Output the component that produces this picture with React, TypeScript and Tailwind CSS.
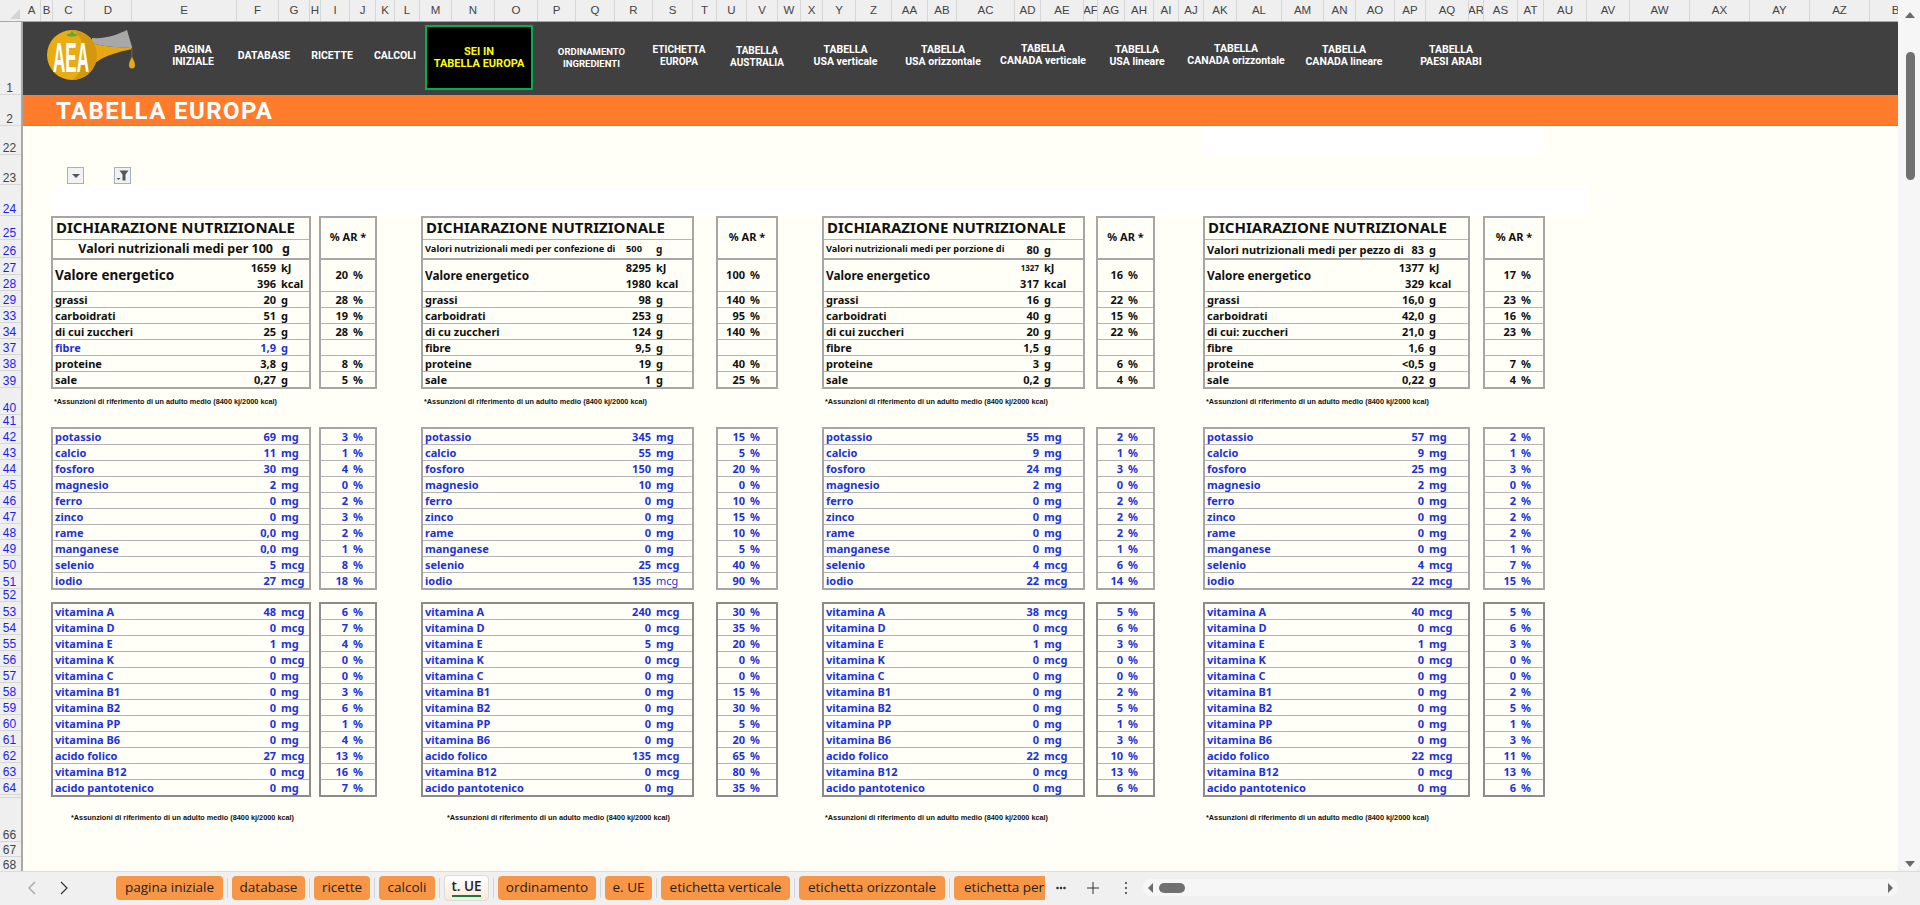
import React from 'react';

const noto = "font-['Noto_Sans',sans-serif]";

const columns = [
  ['A', 'w-[18px]'], ['B', 'w-[12px]'], ['C', 'w-[32px]'], ['D', 'w-[47px]'], ['E', 'w-[105px]'], ['F', 'w-[42px]'],
  ['G', 'w-[31px]'], ['H', 'w-[11px]'], ['I', 'w-[29px]'], ['J', 'w-[26px]'], ['K', 'w-[19px]'], ['L', 'w-[25px]'],
  ['M', 'w-[32px]'], ['N', 'w-[43px]'], ['O', 'w-[43px]'], ['P', 'w-[38px]'], ['Q', 'w-[39px]'], ['R', 'w-[38px]'],
  ['S', 'w-[40px]'], ['T', 'w-[24px]'], ['U', 'w-[30px]'], ['V', 'w-[31px]'], ['W', 'w-[23px]'], ['X', 'w-[22px]'],
  ['Y', 'w-[33px]'], ['Z', 'w-[36px]'], ['AA', 'w-[36px]'], ['AB', 'w-[29px]'], ['AC', 'w-[58px]'], ['AD', 'w-[26px]'],
  ['AE', 'w-[43px]'], ['AF', 'w-[14px]'], ['AG', 'w-[27px]'], ['AH', 'w-[29px]'], ['AI', 'w-[25px]'], ['AJ', 'w-[25px]'],
  ['AK', 'w-[33px]'], ['AL', 'w-[45px]'], ['AM', 'w-[42px]'], ['AN', 'w-[32px]'], ['AO', 'w-[39px]'], ['AP', 'w-[31px]'],
  ['AQ', 'w-[43px]'], ['AR', 'w-[15px]'], ['AS', 'w-[34px]'], ['AT', 'w-[26px]'], ['AU', 'w-[43px]'], ['AV', 'w-[43px]'],
  ['AW', 'w-[60px]'], ['AX', 'w-[60px]'], ['AY', 'w-[60px]'], ['AZ', 'w-[60px]'], ['BA', 'w-[60px]'],
];

const rowHeaders = [
  ['1', 'h-[73px]', 'text-[#444]'], ['2', 'h-[31px]', 'text-[#444]'], ['22', 'h-[29px]', 'text-[#444]'], ['23', 'h-[30px]', 'text-[#444]'],
  ['24', 'h-[31px]', 'text-[#1c1cf0]'], ['25', 'h-[24px]', 'text-[#1c1cf0]'], ['26', 'h-[18px]', 'text-[#1c1cf0]'], ['27', 'h-[17px]', 'text-[#1c1cf0]'],
  ['28', 'h-[16px]', 'text-[#1c1cf0]'], ['29', 'h-[16px]', 'text-[#1c1cf0]'], ['33', 'h-[16px]', 'text-[#1c1cf0]'], ['34', 'h-[16px]', 'text-[#1c1cf0]'],
  ['37', 'h-[16px]', 'text-[#1c1cf0]'], ['38', 'h-[16px]', 'text-[#1c1cf0]'], ['39', 'h-[17px]', 'text-[#1c1cf0]'], ['40', 'h-[27px]', 'text-[#1c1cf0]'],
  ['41', 'h-[13px]', 'text-[#1c1cf0]'], ['42', 'h-[16px]', 'text-[#1c1cf0]'], ['43', 'h-[16px]', 'text-[#1c1cf0]'], ['44', 'h-[16px]', 'text-[#1c1cf0]'],
  ['45', 'h-[16px]', 'text-[#1c1cf0]'], ['46', 'h-[16px]', 'text-[#1c1cf0]'], ['47', 'h-[16px]', 'text-[#1c1cf0]'], ['48', 'h-[16px]', 'text-[#1c1cf0]'],
  ['49', 'h-[16px]', 'text-[#1c1cf0]'], ['50', 'h-[16px]', 'text-[#1c1cf0]'], ['51', 'h-[17px]', 'text-[#1c1cf0]'], ['52', 'h-[13px]', 'text-[#1c1cf0]'],
  ['53', 'h-[17px]', 'text-[#1c1cf0]'], ['54', 'h-[16px]', 'text-[#1c1cf0]'], ['55', 'h-[16px]', 'text-[#1c1cf0]'], ['56', 'h-[16px]', 'text-[#1c1cf0]'],
  ['57', 'h-[16px]', 'text-[#1c1cf0]'], ['58', 'h-[16px]', 'text-[#1c1cf0]'], ['59', 'h-[16px]', 'text-[#1c1cf0]'], ['60', 'h-[16px]', 'text-[#1c1cf0]'],
  ['61', 'h-[16px]', 'text-[#1c1cf0]'], ['62', 'h-[16px]', 'text-[#1c1cf0]'], ['63', 'h-[16px]', 'text-[#1c1cf0]'], ['64', 'h-[16px]', 'text-[#1c1cf0]'],
  ['', 'h-[3px]', 'text-[#444]'], ['66', 'h-[44px]', 'text-[#444]'], ['67', 'h-[15px]', 'text-[#444]'], ['68', 'h-[15px]', 'text-[#444]'],
];

const navItems = [
  { lines: ['PAGINA', 'INIZIALE'], w: 'w-[72px]', pb: 'pb-[5px]' },
  { lines: ['DATABASE'], w: 'w-[70px]', pb: 'pb-[5px]' },
  { lines: ['RICETTE'], w: 'w-[66px]', pb: 'pb-[5px]' },
  { lines: ['CALCOLI'], w: 'w-[60px]', pb: 'pb-[5px]' },
];

const navItemsRight = [
  { lines: ['ORDINAMENTO', 'INGREDIENTI'], w: 'w-[115px]', pb: 'pb-[1px]', size: 'text-[9.5px]' },
  { lines: ['ETICHETTA', 'EUROPA'], w: 'w-[60px]', pb: 'pb-[5px]', size: 'text-[10px]' },
  { lines: ['TABELLA', 'AUSTRALIA'], w: 'w-[96px]', pb: 'pb-[3px]', size: 'text-[10px]' },
  { lines: ['TABELLA', 'USA verticale'], w: 'w-[81px]', pb: 'pb-[5px]' },
  { lines: ['TABELLA', 'USA orizzontale'], w: 'w-[114px]', pb: 'pb-[5px]' },
  { lines: ['TABELLA', 'CANADA verticale'], w: 'w-[86px]', pb: 'pb-[7px]' },
  { lines: ['TABELLA', 'USA lineare'], w: 'w-[102px]', pb: 'pb-[5px]' },
  { lines: ['TABELLA', 'CANADA orizzontale'], w: 'w-[96px]', pb: 'pb-[7px]' },
  { lines: ['TABELLA', 'CANADA lineare'], w: 'w-[120px]', pb: 'pb-[5px]' },
  { lines: ['TABELLA', 'PAESI ARABI'], w: 'w-[94px]', pb: 'pb-[5px]' },
];

const mineralNames = ['potassio', 'calcio', 'fosforo', 'magnesio', 'ferro', 'zinco', 'rame', 'manganese', 'selenio', 'iodio'];
const vitaminNames = ['vitamina A', 'vitamina D', 'vitamina E', 'vitamina K', 'vitamina C', 'vitamina B1', 'vitamina B2', 'vitamina PP', 'vitamina B6', 'acido folico', 'vitamina B12', 'acido pantotenico'];

type Row = { label: string; value: string; unit: string; pct: string; blue?: boolean; lightUnit?: boolean };

const zip = (names: string[], vals: string[][], blue = true): Row[] =>
  names.map((label, i) => ({ label, value: vals[i][0], unit: vals[i][1], pct: vals[i][2], blue }));

const tables = [
  {
    ml: 'ml-[28px]', mainW: 'w-[260px]', arW: 'w-[58px]', gap: 'gap-[8px]', unitW: 'w-[33px]', pctW: 'w-[27px]',
    note2: 'pl-[20px]',
    energyLabel: 'text-[13.5px]', kj: '1659', kjSize: 'text-[11px]', kcal: '396', energyPct: '20',
    sub: (
      <div className="flex h-[18px] items-center text-[12.5px] font-bold leading-none">
        <span className="flex-1 text-right">Valori nutrizionali medi per 100</span>
        <span className="w-[36px] pl-[9px]">g</span>
      </div>
    ),
    macro: [
      { label: 'grassi', value: '20', unit: 'g', pct: '28' }, { label: 'carboidrati', value: '51', unit: 'g', pct: '19' },
      { label: 'di cui zuccheri', value: '25', unit: 'g', pct: '28' }, { label: 'fibre', value: '1,9', unit: 'g', pct: '', blue: true },
      { label: 'proteine', value: '3,8', unit: 'g', pct: '8' }, { label: 'sale', value: '0,27', unit: 'g', pct: '5' },
    ] as Row[],
    minerals: zip(mineralNames, [['69', 'mg', '3'], ['11', 'mg', '1'], ['30', 'mg', '4'], ['2', 'mg', '0'], ['0', 'mg', '2'], ['0', 'mg', '3'], ['0,0', 'mg', '2'], ['0,0', 'mg', '1'], ['5', 'mcg', '8'], ['27', 'mcg', '18']]),
    vitamins: zip(vitaminNames, [['48', 'mcg', '6'], ['0', 'mcg', '7'], ['1', 'mg', '4'], ['0', 'mcg', '0'], ['0', 'mg', '0'], ['0', 'mg', '3'], ['0', 'mg', '6'], ['0', 'mg', '1'], ['0', 'mg', '4'], ['27', 'mcg', '13'], ['0', 'mcg', '16'], ['0', 'mg', '7']]),
  },
  {
    ml: 'ml-[44px]', mainW: 'w-[273px]', arW: 'w-[62px]', gap: 'gap-[22px]', unitW: 'w-[41px]', pctW: 'w-[31px]',
    note2: 'pl-[26px]',
    energyLabel: 'text-[11.8px]', kj: '8295', kjSize: 'text-[11px]', kcal: '1980', energyPct: '100',
    sub: (
      <div className="flex h-[18px] items-center text-[9.3px] font-bold leading-none">
        <span className="w-[203px] whitespace-nowrap pl-[2px]">Valori nutrizionali medi per confezione di</span>
        <span className="w-[30px]">500</span>
        <span className="text-[10px]">g</span>
      </div>
    ),
    macro: [
      { label: 'grassi', value: '98', unit: 'g', pct: '140' }, { label: 'carboidrati', value: '253', unit: 'g', pct: '95' },
      { label: 'di cu zuccheri', value: '124', unit: 'g', pct: '140' }, { label: 'fibre', value: '9,5', unit: 'g', pct: '' },
      { label: 'proteine', value: '19', unit: 'g', pct: '40' }, { label: 'sale', value: '1', unit: 'g', pct: '25' },
    ] as Row[],
    minerals: zip(mineralNames, [['345', 'mg', '15'], ['55', 'mg', '5'], ['150', 'mg', '20'], ['10', 'mg', '0'], ['0', 'mg', '10'], ['0', 'mg', '15'], ['0', 'mg', '10'], ['0', 'mg', '5'], ['25', 'mcg', '40'], ['135', 'mcg', '90']]).map((r) => (r.label === 'iodio' ? { ...r, lightUnit: true } : r)),
    vitamins: zip(vitaminNames, [['240', 'mcg', '30'], ['0', 'mcg', '35'], ['5', 'mg', '20'], ['0', 'mcg', '0'], ['0', 'mg', '0'], ['0', 'mg', '15'], ['0', 'mg', '30'], ['0', 'mg', '5'], ['0', 'mg', '20'], ['135', 'mcg', '65'], ['0', 'mcg', '80'], ['0', 'mg', '35']]),
  },
  {
    ml: 'ml-[44px]', mainW: 'w-[263px]', arW: 'w-[59px]', gap: 'gap-[11px]', unitW: 'w-[44px]', pctW: 'w-[30px]',
    note2: 'pl-[3px]',
    energyLabel: 'text-[11.8px]', kj: '1327', kjSize: 'text-[8px]', kcal: '317', energyPct: '16',
    sub: (
      <div className="flex h-[18px] items-center text-[9.2px] font-bold leading-none">
        <span className="flex-1 whitespace-nowrap pl-[2px]">Valori nutrizionali medi per porzione di</span>
        <span className="text-[11px]">80</span>
        <span className="w-[44px] pl-[5px] text-[11px]">g</span>
      </div>
    ),
    macro: [
      { label: 'grassi', value: '16', unit: 'g', pct: '22' }, { label: 'carboidrati', value: '40', unit: 'g', pct: '15' },
      { label: 'di cui zuccheri', value: '20', unit: 'g', pct: '22' }, { label: 'fibre', value: '1,5', unit: 'g', pct: '' },
      { label: 'proteine', value: '3', unit: 'g', pct: '6' }, { label: 'sale', value: '0,2', unit: 'g', pct: '4' },
    ] as Row[],
    minerals: zip(mineralNames, [['55', 'mg', '2'], ['9', 'mg', '1'], ['24', 'mg', '3'], ['2', 'mg', '0'], ['0', 'mg', '2'], ['0', 'mg', '2'], ['0', 'mg', '2'], ['0', 'mg', '1'], ['4', 'mcg', '6'], ['22', 'mcg', '14']]),
    vitamins: zip(vitaminNames, [['38', 'mcg', '5'], ['0', 'mcg', '6'], ['1', 'mg', '3'], ['0', 'mcg', '0'], ['0', 'mg', '0'], ['0', 'mg', '2'], ['0', 'mg', '5'], ['0', 'mg', '1'], ['0', 'mg', '3'], ['22', 'mcg', '10'], ['0', 'mcg', '13'], ['0', 'mg', '6']]),
  },
  {
    ml: 'ml-[48px]', mainW: 'w-[267px]', arW: 'w-[62px]', gap: 'gap-[13px]', unitW: 'w-[44px]', pctW: 'w-[27px]',
    note2: 'pl-[3px]',
    energyLabel: 'text-[11.8px]', kj: '1377', kjSize: 'text-[11px]', kcal: '329', energyPct: '17',
    sub: (
      <div className="flex h-[18px] items-center text-[11px] font-bold leading-none">
        <span className="flex-1 whitespace-nowrap pl-[2px]">Valori nutrizionali medi per pezzo di</span>
        <span>83</span>
        <span className="w-[44px] pl-[5px]">g</span>
      </div>
    ),
    macro: [
      { label: 'grassi', value: '16,0', unit: 'g', pct: '23' }, { label: 'carboidrati', value: '42,0', unit: 'g', pct: '16' },
      { label: 'di cui: zuccheri', value: '21,0', unit: 'g', pct: '23' }, { label: 'fibre', value: '1,6', unit: 'g', pct: '' },
      { label: 'proteine', value: '<0,5', unit: 'g', pct: '7' }, { label: 'sale', value: '0,22', unit: 'g', pct: '4' },
    ] as Row[],
    minerals: zip(mineralNames, [['57', 'mg', '2'], ['9', 'mg', '1'], ['25', 'mg', '3'], ['2', 'mg', '0'], ['0', 'mg', '2'], ['0', 'mg', '2'], ['0', 'mg', '2'], ['0', 'mg', '1'], ['4', 'mcg', '7'], ['22', 'mcg', '15']]),
    vitamins: zip(vitaminNames, [['40', 'mcg', '5'], ['0', 'mcg', '6'], ['1', 'mg', '3'], ['0', 'mcg', '0'], ['0', 'mg', '0'], ['0', 'mg', '2'], ['0', 'mg', '5'], ['0', 'mg', '1'], ['0', 'mg', '3'], ['22', 'mcg', '11'], ['0', 'mcg', '13'], ['0', 'mg', '6']]),
  },
];

const tabs = [
  { label: 'pagina iniziale', w: 'w-[107px]' }, { label: 'database', w: 'w-[73px]' }, { label: 'ricette', w: 'w-[56px]' },
  { label: 'calcoli', w: 'w-[56px]' }, { label: 't. UE', w: 'w-[45px]', active: true }, { label: 'ordinamento', w: 'w-[98px]' },
  { label: 'e. UE', w: 'w-[47px]' }, { label: 'etichetta verticale', w: 'w-[129px]' }, { label: 'etichetta orizzontale', w: 'w-[146px]' },
];

function Logo() {
  return (
    <svg width="90" height="54" viewBox="47 28 90 54" className="block">
      <path d="M92 38 C108 39 118 34 127 30 L132 47 C118 48 105 47 92 43 Z" fill="#a8a8a8" />
      <path d="M92 43 C105 47 118 48 132 47 L132 49 C118 52 106 55 95 63 Z" fill="#e8a813" />
      <rect x="131" y="48" width="1.5" height="10" fill="#6b5a2a" />
      <path d="M132 57 C133.5 60 135 62 135 65 A3 3.5 0 0 1 129 65 C129 62 130.5 60 132 57 Z" fill="#e8a813" />
      <circle cx="72" cy="55" r="25" fill="#e9ad14" />
      <path d="M72 30 A25 25 0 0 1 72 80 C86 72 90 40 72 30 Z" fill="#d3980f" />
      <path d="M72 30.5 L74 33.5 L78 34.5 L75 36.5 L69 36.5 L66 34.5 L70 33.5 Z" fill="#5fa83c" />
      <text
        x="71"
        y="72"
        textAnchor="middle"
        fill="#fff"
        fontFamily="Liberation Sans, sans-serif"
        fontWeight="700"
        fontSize="42"
        textLength="36"
        lengthAdjust="spacingAndGlyphs"
      >
        AEA
      </text>
    </svg>
  );
}

function NavLabel({ lines, w, pb, size = 'text-[10.5px]' }: { lines: string[]; w: string; pb: string; size?: string }) {
  return (
    <div className={`flex h-full shrink-0 items-center justify-center ${w} ${pb}`}>
      <div className={`whitespace-nowrap text-center font-['Roboto',sans-serif] font-bold leading-[12px] text-white ${size}`}>
        {lines.map((l) => (
          <div key={l}>{l}</div>
        ))}
      </div>
    </div>
  );
}

function DataRow({ row, unitW }: { row: Row; unitW: string }) {
  return (
    <div className={`flex h-[16px] items-center border-b border-[#b4b4b4] pb-[1px] pl-[2px] text-[11px] font-bold leading-none last:h-[15px] last:border-b-0 ${row.blue ? 'text-[#1c33d8]' : 'text-[#111]'}`}>
      <span className="flex-1 whitespace-nowrap">{row.label}</span>
      <span>{row.value}</span>
      <span className={`${unitW} pl-[5px] ${row.lightUnit ? 'font-normal' : ''}`}>{row.unit}</span>
    </div>
  );
}

function PctRow({ row, pctW }: { row: Row; pctW: string }) {
  return (
    <div className={`flex h-[16px] items-center justify-end border-b border-[#b4b4b4] pb-[1px] text-[11px] font-bold leading-none last:h-[15px] last:border-b-0 ${row.blue ? 'text-[#1c33d8]' : 'text-[#111]'}`}>
      <span>{row.pct}</span>
      <span className={`${pctW} pl-[5px]`}>{row.pct ? '%' : ''}</span>
    </div>
  );
}

function BlockPair({ rows, t, border }: { rows: Row[]; t: (typeof tables)[number]; border: string }) {
  return (
    <div className={`flex ${t.gap}`}>
      <div className={`${t.mainW} border-2 ${border}`}>
        {rows.map((r) => (
          <DataRow key={r.label} row={r} unitW={t.unitW} />
        ))}
      </div>
      <div className={`${t.arW} border-2 ${border}`}>
        {rows.map((r) => (
          <PctRow key={r.label} row={r} pctW={t.pctW} />
        ))}
      </div>
    </div>
  );
}

function Footnote() {
  return (
    <span className="whitespace-nowrap font-['Liberation_Sans',sans-serif] text-[7.3px] font-bold leading-none text-[#111]">
      *Assunzioni di riferimento di un adulto medio (8400 kj/2000 kcal)
    </span>
  );
}

function NutritionColumn({ t }: { t: (typeof tables)[number] }) {
  return (
    <div className={`flex shrink-0 flex-col ${t.ml} ${noto}`}>
      <div className={`flex ${t.gap}`}>
        <div className={`${t.mainW} border-2 border-[#a6a6a6]`}>
          <div className="flex h-[22px] items-center whitespace-nowrap border-b border-[#b4b4b4] pb-[3px] pl-[3px] text-[15px] font-bold leading-none text-[#111]">
            DICHIARAZIONE NUTRIZIONALE
          </div>
          <div className="border-b-2 border-[#a6a6a6] text-[#111]">{t.sub}</div>
          <div className="flex h-[32px] items-center border-b border-[#b4b4b4] pl-[2px] font-bold leading-none text-[#111]">
            <span className={`flex-1 whitespace-nowrap ${t.energyLabel}`}>Valore energetico</span>
            <div className="flex flex-col text-right text-[11px]">
              <span className={`flex h-[16px] items-center justify-end ${t.kjSize}`}>{t.kj}</span>
              <span className="flex h-[16px] items-center justify-end">{t.kcal}</span>
            </div>
            <div className={`flex flex-col text-[11px] ${t.unitW} pl-[5px]`}>
              <span className="flex h-[16px] items-center">kJ</span>
              <span className="flex h-[16px] items-center">kcal</span>
            </div>
          </div>
          {t.macro.map((r) => (
            <DataRow key={r.label} row={r} unitW={t.unitW} />
          ))}
        </div>
        <div className={`${t.arW} border-2 border-[#a6a6a6]`}>
          <div className="flex h-[42px] items-center justify-center border-b-2 border-[#a6a6a6] pb-[3px] text-[11px] font-bold leading-none text-[#111]">
            % AR *
          </div>
          <div className="flex h-[32px] items-center justify-end border-b border-[#b4b4b4] pb-[2px] text-[11px] font-bold leading-none text-[#111]">
            <span>{t.energyPct}</span>
            <span className={`${t.pctW} pl-[5px]`}>%</span>
          </div>
          {t.macro.map((r) => (
            <PctRow key={r.label} row={r} pctW={t.pctW} />
          ))}
        </div>
      </div>
      <div className="flex h-[38px] items-start pl-[3px] pt-[9px]">
        <Footnote />
      </div>
      <BlockPair rows={t.minerals} t={t} border="border-[#a6a6a6]" />
      <div className="h-[12px]" />
      <BlockPair rows={t.vitamins} t={t} border="border-[#8c8c8c]" />
      <div className={`flex items-start pt-[17px] ${t.note2}`}>
        <Footnote />
      </div>
    </div>
  );
}

function FilterButton({ children }: { children: React.ReactNode }) {
  return (
    <div className="flex h-[17px] w-[17px] items-center justify-center border border-[#a8b0bc] bg-[#f1f2f4]">
      {children}
    </div>
  );
}

export default function App() {
  return (
    <div className="flex h-[905px] w-[1920px] flex-col overflow-hidden bg-[#f0f0f0] font-['Liberation_Sans',sans-serif]">
      <div className="flex h-[871px] shrink-0">
        <div className="flex w-[1898px] shrink-0 flex-col overflow-hidden">
          {/* column letters */}
          <div className="flex h-[22px] shrink-0 overflow-hidden border-b border-[#a8a8a8] bg-[#efefef]">
            <div className="relative w-[23px] shrink-0">
              <div className="absolute bottom-[2px] right-[3px] h-0 w-0 border-b-[10px] border-l-[10px] border-b-[#d4d4d4] border-l-transparent" />
            </div>
            {columns.map(([label, w]) => (
              <div key={label} className={`flex shrink-0 items-center justify-center overflow-hidden border-r border-[#d6d6d6] text-[11.5px] text-[#444] ${w}`}>
                {label}
              </div>
            ))}
          </div>
          <div className="flex min-h-0 flex-1">
            {/* row numbers */}
            <div className="w-[23px] shrink-0 overflow-hidden border-r-2 border-[#a8a8a8] bg-[#efefef]">
              {rowHeaders.map(([label, h, color], i) => (
                <div key={i} className={`flex items-end justify-center overflow-hidden border-b border-[#d6d6d6] pr-[2px] text-[12px] leading-[12px] ${h} ${color}`}>
                  {label}
                </div>
              ))}
            </div>
            <div className="min-w-0 flex-1 overflow-hidden">
              {/* nav band */}
              <div className="flex h-[73px] items-center bg-[#404040]">
                <div className="w-[134px] shrink-0 pb-[7px] pl-[24px]">
                  <Logo />
                </div>
                {navItems.map((n) => (
                  <NavLabel key={n.lines[0]} {...n} />
                ))}
                <div className="mb-[3px] flex h-[65px] w-[108px] shrink-0 items-center justify-center border-[2px] border-[#00b050] bg-black pt-[2px] text-center font-['Roboto',sans-serif] text-[11px] font-bold leading-[12px] text-[#ffff00]">
                  <div>
                    <div>SEI IN</div>
                    <div>TABELLA EUROPA</div>
                  </div>
                </div>
                <div className="w-[1px] shrink-0" />
                {navItemsRight.map((n) => (
                  <NavLabel key={n.lines[1]} {...n} />
                ))}
              </div>
              {/* orange title */}
              <div className="flex h-[31px] items-center border-b border-[#8f8f8f] bg-[#ff7c2c] pl-[33px] pt-[1px]">
                <span className="font-['Roboto',sans-serif] text-[24px] font-bold leading-none tracking-[1.4px] text-white">TABELLA EUROPA</span>
              </div>
              {/* sheet */}
              <div className="h-[746px] bg-[#fffff7]">
                <div className="ml-[1180px] h-[29px] w-[341px] bg-white" />
                <div className="flex h-[30px] items-start pt-[12px]">
                  <div className="ml-[44px]">
                    <FilterButton>
                      <div className="mt-[1px] h-0 w-0 border-x-[4px] border-t-[4px] border-x-transparent border-t-[#555]" />
                    </FilterButton>
                  </div>
                  <div className="ml-[30px]">
                    <FilterButton>
                      <svg width="13" height="13" viewBox="0 0 13 13">
                        <path d="M3.5 1.5 H12.5 L9.5 5.5 V11.5 H6.5 V5.5 Z" fill="#555" />
                        <path d="M0.5 9 H4.5 L2.5 11 Z" fill="#555" />
                      </svg>
                    </FilterButton>
                  </div>
                </div>
                <div className="ml-[28px] h-[31px] w-[1537px] bg-white" />
                <div className="flex">
                  {tables.map((t, i) => (
                    <NutritionColumn key={i} t={t} />
                  ))}
                </div>
              </div>
            </div>
          </div>
        </div>
        {/* vertical scrollbar */}
        <div className="flex w-[22px] shrink-0 flex-col items-center rounded-b-lg bg-[#f6f6f6] pl-[2px] pt-[12px]">
          <div className="h-0 w-0 border-x-[5px] border-b-[6px] border-x-transparent border-b-[#6a6a6a]" />
          <div className="mt-[34px] h-[128px] w-[9px] rounded-full bg-[#707070]" />
          <div className="mt-[681px] h-0 w-0 border-x-[5px] border-t-[6px] border-x-transparent border-t-[#6a6a6a]" />
        </div>
      </div>
      {/* tab bar */}
      <div className="flex h-[32px] shrink-0 items-center border-t border-[#dcdcdc] bg-[#f0f0f1]">
        <div className="flex w-[116px] shrink-0 items-center pl-[26px]">
          <svg width="12" height="14" viewBox="0 0 12 14" className="mr-[20px]">
            <path d="M9 1 L3 7 L9 13" fill="none" stroke="#a0a0a0" strokeWidth="1.2" />
          </svg>
          <svg width="12" height="14" viewBox="0 0 12 14">
            <path d="M3 1 L9 7 L3 13" fill="none" stroke="#333" strokeWidth="1.2" />
          </svg>
        </div>
        <div className="flex w-[932px] shrink-0 items-center overflow-hidden font-['Open_Sans',sans-serif] text-[13.5px] text-[#222]">
          {tabs.map((tab) => (
            <React.Fragment key={tab.label}>
              {tab.active ? (
                <div className={`relative flex h-[26px] shrink-0 items-start justify-center rounded-[4px] border border-[#dadada] bg-gradient-to-b from-white to-[#fde8d8] font-semibold leading-[20px] ${tab.w}`}>
                  {tab.label}
                  <div className="absolute bottom-[3px] left-[7px] right-[7px] h-[2px] bg-[#107c41]" />
                </div>
              ) : (
                <div className={`flex h-[24px] shrink-0 items-center justify-center rounded-[4px] bg-[#f89647] ${tab.w}`}>{tab.label}</div>
              )}
              <div className="mx-[4px] h-[20px] w-px shrink-0 bg-[#d4d4d4]" />
            </React.Fragment>
          ))}
          <div className="flex h-[24px] w-[91px] shrink-0 items-center overflow-hidden whitespace-nowrap rounded-l-[4px] bg-[#f89647] pl-[10px]">etichetta personalizzata</div>
        </div>
        <div className="ml-[8px] flex w-[87px] shrink-0 items-center text-[#333]">
          <svg width="10" height="4" viewBox="0 0 10 4">
            <circle cx="1.5" cy="2" r="1.3" fill="#333" />
            <circle cx="5" cy="2" r="1.3" fill="#333" />
            <circle cx="8.5" cy="2" r="1.3" fill="#333" />
          </svg>
          <svg width="14" height="14" viewBox="0 0 14 14" className="ml-[20px]">
            <path d="M7 1 V13 M1 7 H13" stroke="#333" strokeWidth="1" />
          </svg>
          <svg width="4" height="14" viewBox="0 0 4 14" className="ml-[24px]">
            <circle cx="2" cy="2" r="1" fill="#333" />
            <circle cx="2" cy="7" r="1" fill="#333" />
            <circle cx="2" cy="12" r="1" fill="#333" />
          </svg>
        </div>
        <div className="flex h-[17px] w-[755px] shrink-0 items-center justify-between rounded-lg bg-[#f6f6f6] px-[5px]">
          <div className="flex items-center gap-[6px]">
            <div className="h-0 w-0 border-y-[5px] border-r-[5px] border-y-transparent border-r-[#6a6a6a]" />
            <div className="h-[10px] w-[26px] rounded-full bg-[#707070]" />
          </div>
          <div className="h-0 w-0 border-y-[5px] border-l-[5px] border-y-transparent border-l-[#6a6a6a]" />
        </div>
      </div>
    </div>
  );
}
